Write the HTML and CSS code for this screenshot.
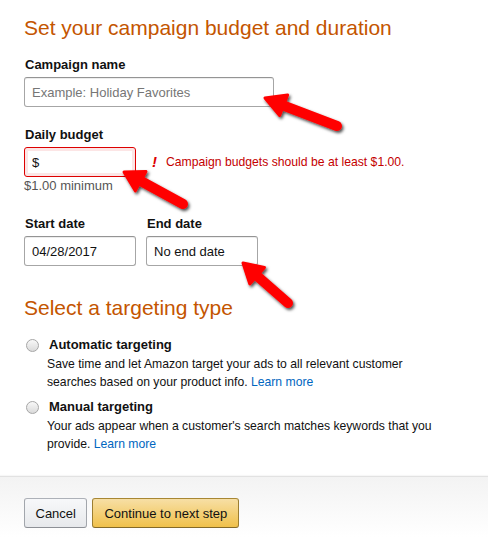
FILE: index.html
```html
<!DOCTYPE html>
<html lang="en">
<head>
  <meta charset="UTF-8">
  <title>Campaign settings</title>
  <link rel="stylesheet" href="styles.css">
</head>
<body>

  <div class="page">
    <h1>Set your campaign budget and duration</h1>

    <div class="field">
      <label for="name">Campaign name</label>
      <input type="text" id="name" class="input input-name" placeholder="Example: Holiday Favorites">
    </div>

    <div class="field field-budget">
      <label for="budget">Daily budget</label>
      <div class="budget-row">
        <input type="text" id="budget" class="input input-small has-error" value="$">
        <span class="error-mark">!</span>
        <span class="error-text">Campaign budgets should be at least $1.00.</span>
      </div>
      <div class="hint">$1.00 minimum</div>
    </div>

    <div class="dates">
      <div class="field">
        <label for="start">Start date</label>
        <input type="text" id="start" class="input input-small" value="04/28/2017">
      </div>
      <div class="field">
        <label for="end">End date</label>
        <input type="text" id="end" class="input input-small" value="No end date">
      </div>
    </div>

    <h2>Select a targeting type</h2>

    <div class="option">
      <span class="radio"></span>
      <div>
        <div class="option-title">Automatic targeting</div>
        <p class="option-desc">Save time and let Amazon target your ads to all relevant customer searches based on your product info. <a href="#">Learn more</a></p>
      </div>
    </div>

    <div class="option">
      <span class="radio"></span>
      <div>
        <div class="option-title">Manual targeting</div>
        <p class="option-desc">Your ads appear when a customer's search matches keywords that you provide. <a href="#">Learn more</a></p>
      </div>
    </div>
  </div>

  <div class="footer">
    <button type="button" class="btn btn-cancel">Cancel</button>
    <button type="button" class="btn btn-primary">Continue to next step</button>
  </div>

  <!-- red annotation arrows drawn over the form -->
  <svg class="arrows" width="488" height="546" viewBox="0 0 488 546">
    <defs>
      <filter id="shadow" x="-20%" y="-20%" width="140%" height="140%">
        <feDropShadow dx="1.5" dy="2" stdDeviation="1.4" flood-color="#000" flood-opacity="0.7"/>
      </filter>
    </defs>
    <g fill="#f00" stroke="#f00" filter="url(#shadow)">
      <g transform="translate(265,98) rotate(21.3)">
        <polygon points="0,0 20,-11 20,11" stroke-linejoin="round" stroke-width="3"/>
      </g>
      <line x1="282" y1="105" x2="337" y2="126" stroke-width="10" stroke-linecap="round"/>

      <g transform="translate(124,172) rotate(29)">
        <polygon points="0,0 19,-11 19,11" stroke-linejoin="round" stroke-width="3"/>
      </g>
      <line x1="139" y1="180" x2="183" y2="204" stroke-width="10" stroke-linecap="round"/>

      <g transform="translate(243,263) rotate(42)">
        <polygon points="0,0 19,-11 19,11" stroke-linejoin="round" stroke-width="3"/>
      </g>
      <line x1="256" y1="275" x2="288" y2="303" stroke-width="10" stroke-linecap="round"/>
    </g>
  </svg>

</body>
</html>
```

FILE: styles.css
```css
body {
  font-family: "Liberation Sans", Arial, sans-serif;
  font-size: 13px;
  line-height: 18px;
  color: #111;
  background: white;
  margin: 0;
  position: relative;
  min-height: 546px;
}

.page {
  padding: 15px 24px 0;
}

h1, h2 {
  font-size: 21px;
  line-height: 25px;
  font-weight: normal;
  color: #c45500;
  margin: 0;
}

h2 {
  margin-top: 29px;
}

.field {
  margin-top: 15px;
}

.field label {
  display: block;
  font-weight: bold;
  padding: 1px 0 0 1px;
  margin-bottom: 3px;
}

.field-budget {
  margin-top: 18px;
}

.input {
  box-sizing: border-box;
  height: 30px;
  padding: 0 7px;
  border: 1px solid #a6a6a6;
  border-top-color: #949494;
  border-radius: 3px;
  font-family: inherit;
  font-size: 13px;
  color: #111;
  background: white;
  box-shadow: 0 1px 0 rgba(255,255,255,0.5), 0 1px 0 rgba(0,0,0,0.07) inset;
  outline: none;
}

.input::placeholder {
  color: #767676;
}

.input-name {
  width: 250px;
}

.input-small {
  width: 112px;
}

.has-error {
  border-color: #d00;
  box-shadow: 0 0 0 3px rgba(221,0,0,0.1) inset;
}

.budget-row {
  display: flex;
  align-items: center;
}

.error-mark {
  margin-left: 16px;
  width: 14px;
  color: #d00;
  font-weight: bold;
  font-style: italic;
  font-size: 15px;
}

.error-text {
  color: #c40000;
  font-size: 12.2px;
}

.hint {
  color: #555;
}

.dates {
  display: flex;
  gap: 10px;
  margin-top: 4px;
}

.option {
  display: flex;
  gap: 8px;
  margin-top: 16px;
  padding-left: 2px;
}

.option + .option {
  margin-top: 7px;
}

.radio {
  flex: none;
  box-sizing: border-box;
  width: 13px;
  height: 13px;
  margin-top: 3px;
  border: 1px solid #a6a6a6;
  border-radius: 50%;
  background: linear-gradient(#f8f8f8, #dadada);
}

.option-title {
  font-weight: bold;
  padding-left: 2px;
}

.option-desc {
  margin: 1px 0 0;
  color: #111;
  font-size: 12.2px;
  line-height: 18px;
  max-width: 400px;
}

a {
  color: #0066c0;
  text-decoration: none;
}

.footer {
  margin-top: 23px;
  border-top: 1px solid #e2e2e2;
  box-shadow: 0 -1px 1px rgba(0,0,0,0.03);
  background: linear-gradient(#f3f3f3, #fff 60px);
  padding: 21px 24px 20px;
  display: flex;
  gap: 5px;
}

.btn {
  box-sizing: border-box;
  height: 30px;
  padding: 0 11px;
  border: 1px solid;
  border-radius: 3px;
  font-family: inherit;
  font-size: 13px;
  color: #111;
  cursor: pointer;
}

.btn-cancel {
  padding: 0 10.5px;
  border-color: #adb1b8 #a2a6ac #8d9096;
  background: linear-gradient(#f7f8fa, #e7e9ec);
}

.btn-primary {
  border-color: #a88734 #9c7e31 #846a29;
  background: linear-gradient(#f7dfa5, #f0c14b);
}

.arrows {
  position: absolute;
  top: 0;
  left: 0;
  pointer-events: none;
}
```
